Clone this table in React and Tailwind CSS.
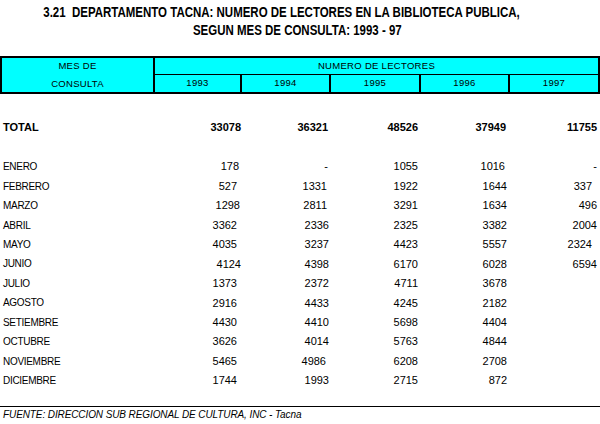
import React from 'react';

// cada celda: [valor, clase de relleno derecho]; por defecto según columna
const defaults = ['pr-[5px]', 'pr-[2px]', 'pr-[3px]', 'pr-[3px]', 'pr-[3px]'];

const meses = [
  ['ENERO', [['178', 'pr-[3px]'], ['-', 'pr-[3px]'], ['1055'], ['1016', 'pr-[5px]'], ['-', 'pr-[3px]']]],
  ['FEBRERO', [['527'], ['1331', 'pr-[4px]'], ['1922'], ['1644'], ['337', 'pr-[8px]']]],
  ['MARZO', [['1298', 'pr-[2px]'], ['2811', 'pr-[4px]'], ['3291'], ['1634'], ['496']]],
  ['ABRIL', [['3362'], ['2336'], ['2325'], ['3382'], ['2004']]],
  ['MAYO', [['4035'], ['3237'], ['4423'], ['5557'], ['2324', 'pr-[8px]']]],
  ['JUNIO', [['4124', 'pr-[1px]'], ['4398'], ['6170'], ['6028'], ['6594']]],
  ['JULIO', [['1373'], ['2372'], ['4711'], ['3678'], ['']]],
  ['AGOSTO', [['2916'], ['4433'], ['4245'], ['2182'], ['']]],
  ['SETIEMBRE', [['4430'], ['4410'], ['5698'], ['4404'], ['']]],
  ['OCTUBRE', [['3626'], ['4014'], ['5763'], ['4844'], ['']]],
  ['NOVIEMBRE', [['5465'], ['4986', 'pr-[5px]'], ['6208'], ['2708'], ['']]],
  ['DICIEMBRE', [['1744'], ['1993'], ['2715'], ['872'], ['']]],
];

const totales = [['33078', 'pr-[1px]'], ['36321', 'pr-[3px]'], ['48526'], ['37949', 'pr-[4px]'], ['11755']];

const cols = 'grid grid-cols-[153px_89px_89px_90px_89px_90px]';

export default function App() {
  return (
    <div className="w-[600px] h-[424px] bg-white text-black overflow-hidden" style={{ fontFamily: '"Liberation Sans", Arial, sans-serif' }}>
      {/* título condensado (Arial Narrow en el original) */}
      <div className="pt-[3px] font-bold text-[14px] leading-[18px] flex flex-col items-center">
        <div className="whitespace-nowrap scale-x-[0.82] mr-[37px]">3.21&nbsp;&nbsp;DEPARTAMENTO TACNA: NUMERO DE LECTORES EN LA BIBLIOTECA PUBLICA,</div>
        <div className="whitespace-nowrap scale-x-[0.82] mr-[6px]">SEGUN MES DE CONSULTA: 1993 - 97</div>
      </div>

      <div className="mt-[17px] flex bg-[#00ffff] border-2 border-black text-[9.5px] tracking-[0.3px] h-[38px]">
        <div className="w-[151px] flex flex-col items-center justify-center leading-[18px]">
          <span>MES DE</span>
          <span>CONSULTA</span>
        </div>
        <div className="flex-1 flex flex-col border-l-2 border-black">
          <div className="h-[17px] flex items-center justify-center border-b border-black">NUMERO DE LECTORES</div>
          <div className="flex-1 grid grid-cols-[87px_89px_90px_89px_1fr]">
            <div className="flex items-center justify-center border-r-2 border-black">1993</div>
            <div className="flex items-center justify-center border-r-2 border-black">1994</div>
            <div className="flex items-center justify-center border-r-2 border-black">1995</div>
            <div className="flex items-center justify-center border-r-2 border-black">1996</div>
            <div className="flex items-center justify-center">1997</div>
          </div>
        </div>
      </div>

      <div className={`${cols} mt-[24px] h-[19px] items-center font-bold text-[11px]`}>
        <div className="pl-[3px]">TOTAL</div>
        {totales.map(([v, p], i) => (
          <div key={i} className={`text-right ${p || defaults[i]}`}>{v}</div>
        ))}
      </div>

      <div className="mt-[20px]">
        {meses.map(([mes, vals]) => (
          <div key={mes} className={`${cols} h-[19.45px] items-center`}>
            <div className="pl-[3px] text-[10px] tracking-[-0.3px]">{mes}</div>
            {vals.map(([v, p], i) => (
              <div key={i} className={`text-right text-[11px] ${p || defaults[i]}`}>{v}</div>
            ))}
          </div>
        ))}
      </div>

      <div className="mt-[16px] border-t border-black pt-[1px] pl-[3px] italic text-[10px] tracking-[-0.1px] leading-[13px]">
        FUENTE: DIRECCION SUB REGIONAL DE CULTURA, INC - Tacna
      </div>
    </div>
  );
}
